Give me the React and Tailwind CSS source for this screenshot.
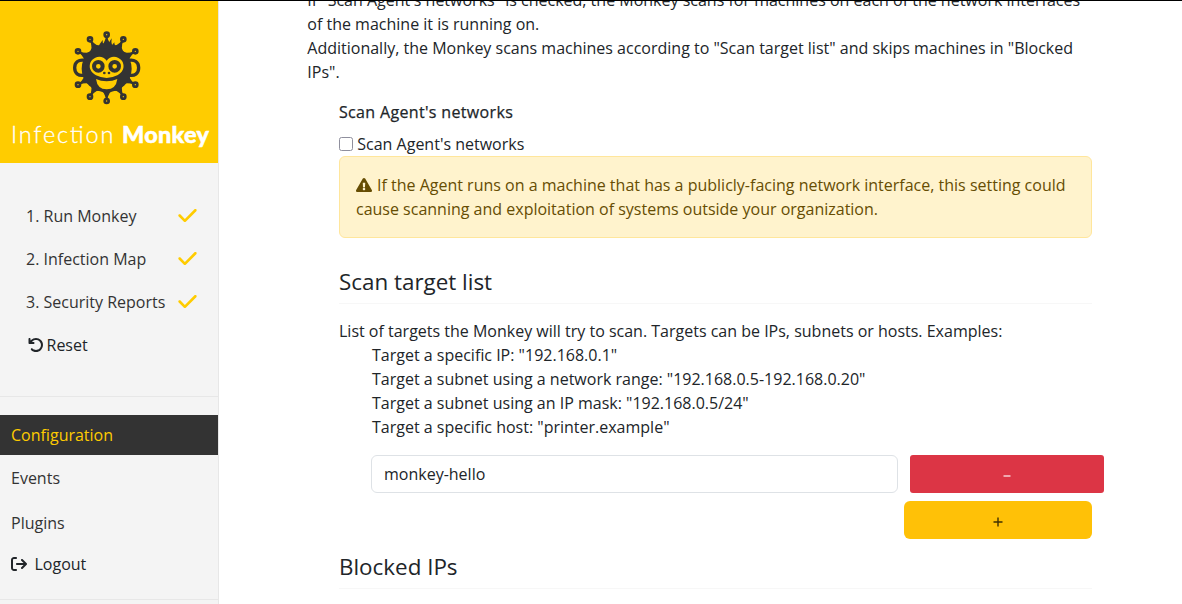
import React from "react";
import { FaExclamationTriangle } from "react-icons/fa";
import { FaArrowRotateLeft, FaArrowRightFromBracket, FaCheck } from "react-icons/fa6";

const SPIKES = [
  [140, 44], [190, 58], [226, 94], [226, 194], [190, 230],
  [140, 243], [90, 230], [54, 194], [54, 94], [90, 58],
];

function spikeBase([x, y]) {
  const dx = x - 140;
  const dy = y - 144;
  const len = Math.hypot(dx, dy);
  const ux = dx / len;
  const uy = dy / len;
  const at = (r, w) => `${140 + ux * r - uy * w},${144 + uy * r + ux * w}`;
  return [at(64, 22), at(75, 9), at(88, 3), at(88, -3), at(75, -9), at(64, -22)].join(" ");
}

function MonkeyLogo() {
  return (
    <svg viewBox="0 0 300 285" className="h-[95px] w-[100px]" aria-hidden="true">
      <g stroke="#333" strokeWidth="7" fill="#333">
        {SPIKES.map(([x, y]) => (
          <line key={`l${x}-${y}`} x1="140" y1="144" x2={x} y2={y} />
        ))}
      </g>
      <g fill="#333">
        {SPIKES.map((p) => (
          <polygon key={`b${p[0]}-${p[1]}`} points={spikeBase(p)} />
        ))}
      </g>
      <g stroke="#333" strokeWidth="8" fill="#ffcc00">
        {SPIKES.map(([x, y]) => (
          <circle key={`c${x}-${y}`} cx={x} cy={y} r="6" />
        ))}
      </g>
      <path d="M74 121 C56 118 44 126 44 143 C44 161 56 169 74 165" fill="none" stroke="#333" strokeWidth="10" />
      <path d="M206 121 C224 118 236 126 236 143 C236 161 224 169 206 165" fill="none" stroke="#333" strokeWidth="10" />
      <ellipse cx="140" cy="146" rx="75" ry="71" fill="#333" />
      <path d="M112 86 Q118 72 128 60 Q127 70 132 75 L137 67 L142 75 Q147 68 155 55 Q153 68 156 75 L163 67 Q162 75 174 88 Z" fill="#333" />
      <path
        d="M140 122 C132 109 116 108 106 113 C92 119 86 134 91 148 C95 158 102 162 108 166 Q140 182 172 166 C178 162 185 158 189 148 C194 134 188 119 174 113 C164 108 148 109 140 122Z"
        fill="#ffcc00"
      />
      <path d="M108 177 Q112 208 140 208 Q168 208 172 177 Q158 184 140 184 Q122 184 108 177Z" fill="#ffcc00" />
      <circle cx="115" cy="139" r="13" fill="#ffcc00" stroke="#333" strokeWidth="12" />
      <circle cx="164" cy="139" r="13" fill="#ffcc00" stroke="#333" strokeWidth="12" />
      <circle cx="133" cy="159" r="4" fill="#333" />
      <circle cx="147" cy="159" r="4" fill="#333" />
    </svg>
  );
}

function Wordmark() {
  return (
    <svg viewBox="0 0 218 40" className="h-10 w-[218px]" fill="#fff" stroke="#fff">
      <text x="11" y="28" textLength="102.5" strokeWidth="0.3" className="font-['Lato'] text-[23.5px] font-light">Infection</text>
      <text x="122" y="28" textLength="87" strokeWidth="0.5" className="font-['Lato'] text-[23.5px] font-black">Monkey</text>
    </svg>
  );
}

function Step({ children }) {
  return (
    <li className="flex h-[43px] items-center justify-between pr-5 pl-[26px] text-[#333]">
      <span>{children}</span>
      <FaCheck className="h-[21px] w-[21px] text-[#ffcc00]" />
    </li>
  );
}

function Sidebar() {
  return (
    <aside className="flex w-[219px] shrink-0 flex-col border-r border-[#e7e7e7] bg-[#f4f4f4]">
      <div className="flex h-[162px] shrink-0 flex-col bg-[#ffcc00] pt-[19px]">
        <div className="h-[95px] pl-[60px]"><MonkeyLogo /></div>
        <Wordmark />
      </div>
      <ul className="flex h-[234px] shrink-0 flex-col border-b border-[#e7e7e7] pt-[31px]">
        <Step>1. Run Monkey</Step>
        <Step>2. Infection Map</Step>
        <Step>3. Security Reports</Step>
        <li className="flex h-[43px] items-center gap-[2.5px] pl-7 text-[#212529]">
          <FaArrowRotateLeft className="h-4 w-4" />
          Reset
        </li>
      </ul>
      <ul className="mt-[18px] flex h-[185px] shrink-0 flex-col border-b border-[#e7e7e7] text-[#333]">
        <li className="flex h-10 items-center bg-[#333] pl-[11px] text-[#ffcc00]">Configuration</li>
        <li className="flex h-[46px] items-center pl-[11px]">Events</li>
        <li className="flex h-11 items-center pl-[11px]">Plugins</li>
        <li className="flex h-[38px] items-center gap-[7.5px] pl-[11px] text-[#212529]">
          <FaArrowRightFromBracket className="h-4 w-4" />
          Logout
        </li>
      </ul>
    </aside>
  );
}

function SectionTitle({ children }) {
  return <h2 className="flex h-[43px] items-center border-b border-[#f7f7f7] text-[22.4px]">{children}</h2>;
}

export default function App() {
  return (
    <div className="flex h-[604px] w-[1182px] overflow-hidden border-t border-black bg-white font-['Open_Sans',sans-serif] text-base leading-6 text-[#212529]">
      <Sidebar />
      <main className="-mt-[13px] ml-[88.3px] w-[784.7px] shrink-0">
        <p className="whitespace-nowrap">
          If "Scan Agent's networks" is checked, the Monkey scans for machines on each of the network interfaces<br />
          of the machine it is running on.<br />
          Additionally, the Monkey scans machines according to "Scan target list" and skips machines in "Blocked<br />
          IPs".
        </p>
        <div className="ml-[31.7px] pt-4">
          <h3 className="tracking-[0.34px] [-webkit-text-stroke:0.25px_#212529]">Scan Agent's networks</h3>
          <label className="mt-2 flex items-center gap-[4.3px]">
            <span className="h-3.5 w-3.5 rounded-[2.5px] border border-[#8f8f9d] bg-white" />
            Scan Agent's networks
          </label>
          <div className="rounded-md border border-[#ffe69c] bg-[#fff3cd] p-4 whitespace-nowrap text-[#664d03]">
            <FaExclamationTriangle className="mr-[5px] inline h-4 w-4 align-[-2px]" />
            If the Agent runs on a machine that has a publicly-facing network interface, this setting could<br />
            cause scanning and exploitation of systems outside your organization.
          </div>
          <div className="pt-[23px]">
            <SectionTitle>Scan target list</SectionTitle>
          </div>
          <p className="mt-[15px]">List of targets the Monkey will try to scan. Targets can be IPs, subnets or hosts. Examples:</p>
          <ul className="pl-[33px]">
            <li>Target a specific IP: "192.168.0.1"</li>
            <li>Target a subnet using a network range: "192.168.0.5-192.168.0.20"</li>
            <li>Target a subnet using an IP mask: "192.168.0.5/24"</li>
            <li>Target a specific host: "printer.example"</li>
          </ul>
          <div className="mt-4 ml-8 flex w-[733px] gap-3">
            <div className="flex h-[38px] w-[527px] items-center rounded-md border border-[#dee2e6] px-3">monkey-hello</div>
            <button className="flex h-[38px] w-[194px] items-center justify-center rounded-[3px] bg-[#dc3545]">
              <svg viewBox="0 0 10 10" className="mt-1 h-2.5 w-2.5"><path d="M1.5 5h7" stroke="#f0a8af" strokeWidth="2" /></svg>
            </button>
          </div>
          <div className="mt-2 flex justify-end">
            <button className="flex h-[38px] w-[188px] items-center justify-center rounded-md bg-[#ffc107]">
              <svg viewBox="0 0 10 10" className="mt-[3px] h-2.5 w-2.5"><path d="M.5 5h9M5 .5v9" stroke="#403002" strokeWidth="1.4" /></svg>
            </button>
          </div>
          <div className="pt-[7px]">
            <SectionTitle>Blocked IPs</SectionTitle>
          </div>
        </div>
      </main>
    </div>
  );
}
